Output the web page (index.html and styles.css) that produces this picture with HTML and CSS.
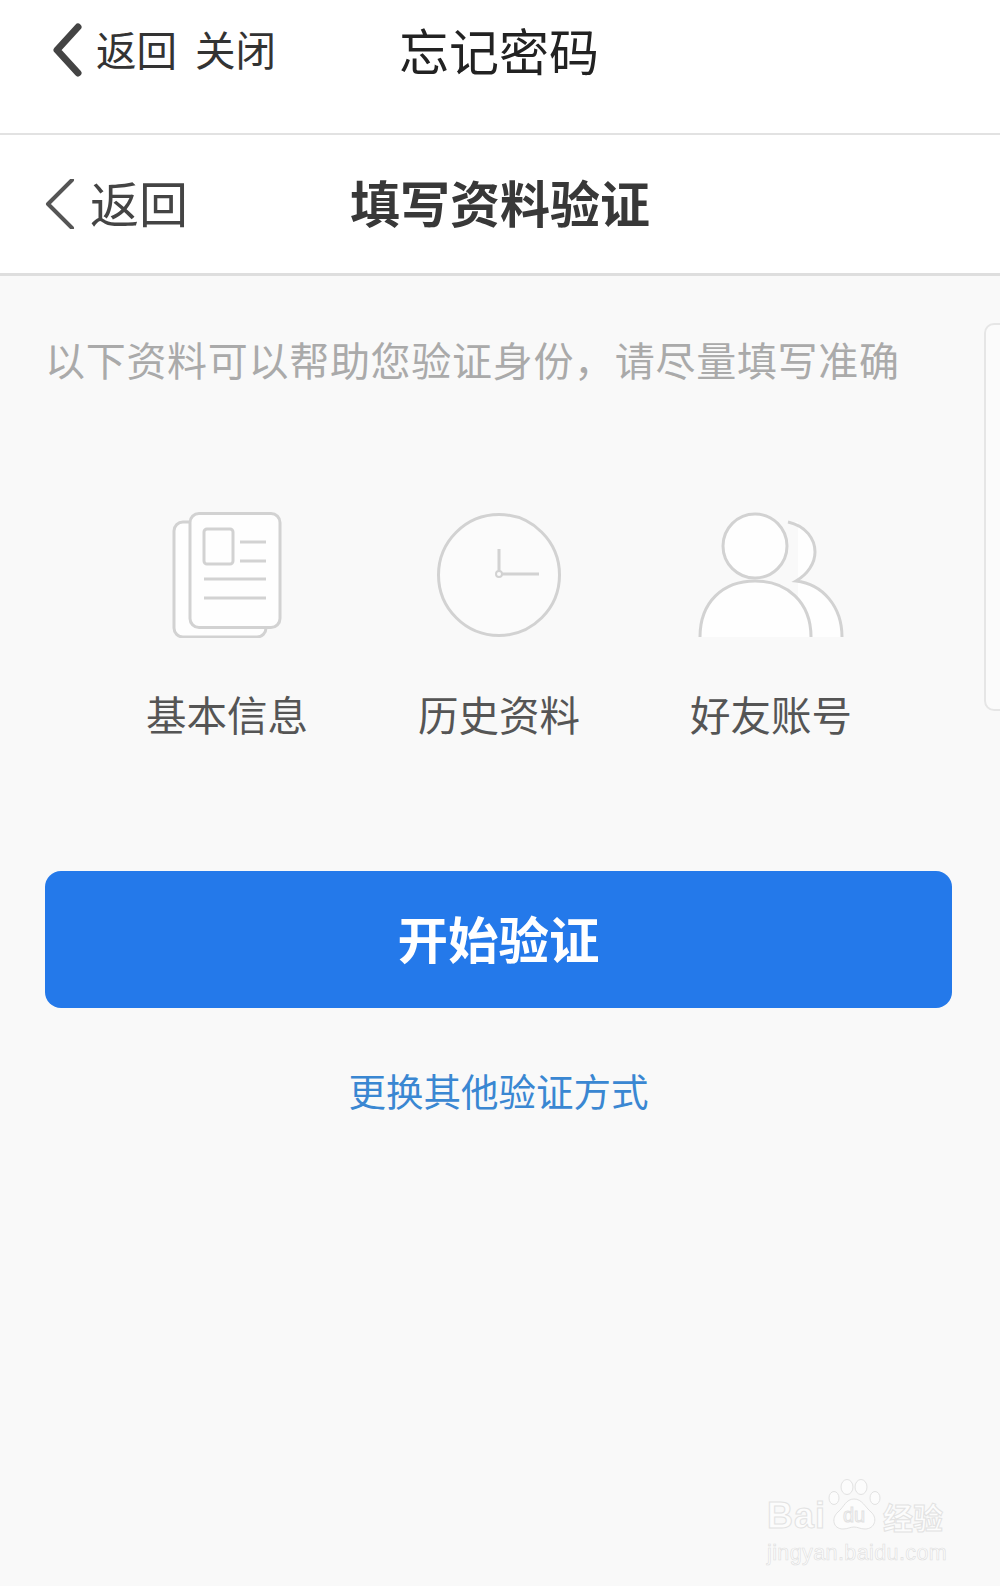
FILE: index.html
```html
<!DOCTYPE html>
<html lang="zh-CN">
<head>
    <meta charset="UTF-8">
    <meta name="viewport" content="width=device-width, initial-scale=1.0">
    <title>忘记密码</title>
    <link rel="stylesheet" href="styles.css">
</head>
<body>
    <header class="nav nav-top">
        <div class="nav-left">
            <svg class="chevron-bold" width="32" height="54" viewBox="0 0 32 54">
                <path d="M27 4 L6 27 L27 50" />
            </svg>
            <span class="nav-link">返回</span>
            <span class="nav-link">关闭</span>
        </div>
        <h1 class="nav-title">忘记密码</h1>
    </header>

    <header class="nav nav-sub">
        <div class="nav-left">
            <svg class="chevron-thin" width="30" height="50" viewBox="0 0 30 50">
                <path d="M27 1 L3 25 L27 49" />
            </svg>
            <span class="nav-back">返回</span>
        </div>
        <h2 class="nav-heading">填写资料验证</h2>
    </header>

    <main class="content">
        <p class="hint">以下资料可以帮助您验证身份，请尽量填写准确</p>

        <div class="options">
            <div class="option">
                <svg class="option-icon" width="130" height="126" viewBox="0 0 130 126">
                    <rect x="12" y="10" width="92" height="115" rx="9" />
                    <rect x="28" y="1.500" width="90" height="114" rx="9" />
                    <rect x="42" y="17" width="29" height="35" rx="3" />
                    <path d="M78 30 H104 M78 49 H104 M42 67 H104 M42 86 H104" />
                </svg>
                <span class="option-label">基本信息</span>
            </div>
            <div class="option">
                <svg class="option-icon clock" width="130" height="126" viewBox="0 0 130 126">
                    <circle cx="65" cy="63" r="60.500" />
                    <path class="clock-hand" d="M65 37 V62 H105" />
                    <circle class="clock-dot" cx="65" cy="62" r="3" />
                </svg>
                <span class="option-label">历史资料</span>
            </div>
            <div class="option">
                <svg class="option-icon" width="146" height="126" viewBox="0 0 146 126">
                    <path class="person-fill" d="M90 10 C108 14 117 27 117 40 C117 51 110 62 98 69 C125 72 144 95 144 125 H100 V10 Z" />
                    <path class="person-line" d="M90 10 C108 14 117 27 117 40 C117 51 110 62 98 69 C125 72 144 95 144 125" />
                    <path class="person-fill" d="M2 125 C2 90 25 69 57 69 C89 69 113 90 113 125 Z" />
                    <path class="person-line" d="M2 125 C2 90 25 69 57 69 C89 69 113 90 113 125" />
                    <circle cx="57" cy="34" r="32" />
                </svg>
                <span class="option-label">好友账号</span>
            </div>
        </div>

        <button type="button" class="btn-start"><span class="btn-text">开始验证</span></button>
        <a class="switch-link" href="#">更换其他验证方式</a>
    </main>

    <!-- panel peeking in from the right edge -->
    <div class="side-panel"></div>

    <!-- watermark -->
    <div class="watermark">
        <div class="wm-logo">
            <span class="wm-text">Bai</span>
            <svg class="wm-paw" width="54" height="52" viewBox="0 0 54 52">
                <ellipse cx="6" cy="19" rx="5" ry="6.500" />
                <ellipse cx="19" cy="8" rx="6" ry="7.500" />
                <ellipse cx="33" cy="8" rx="6" ry="7.500" />
                <ellipse cx="47" cy="19" rx="5" ry="6.500" />
                <path d="M26 20 C34 20 37 28 43 33 C50 39 47 50 37 50 C32 50 30 48 26 48 C22 48 20 50 15 50 C5 50 3 39 10 33 C16 28 18 20 26 20 Z" />
                <text class="wm-du" x="26" y="43">du</text>
            </svg>
            <span class="wm-text wm-cn">经验</span>
        </div>
        <div class="wm-url">jingyan.baidu.com</div>
    </div>
</body>
</html>
```

FILE: styles.css
```css
* {
    box-sizing: border-box;
    margin: 0;
    padding: 0;
}

body {
    position: relative;
    height: 1586px;
    overflow: hidden;
    background-color: #f9f9f9;
    color: #333;
    font-family: "Noto Sans CJK SC", "Liberation Sans", sans-serif;
}

.nav {
    display: grid;
    grid-template-columns: 1fr auto 1fr;
    align-items: center;
    background-color: #fff;
    border-bottom: 2px solid #e2e2e2;
}

.nav-left {
    display: flex;
    align-items: center;
}

.nav-top {
    height: 135px;
    padding-bottom: 34px;
}

.nav-top .nav-left {
    padding-left: 51px;
}

.chevron-bold {
    margin-right: 13px;
}

.chevron-bold path {
    fill: none;
    stroke: #444;
    stroke-width: 7;
    stroke-linecap: round;
    stroke-linejoin: round;
}

.nav-link {
    margin-right: 18px;
    font-size: 40.500px;
    line-height: 1;
    color: #333;
}

.nav-title {
    margin-right: 2px;
    margin-bottom: 1px;
    font-size: 50px;
    font-weight: 400;
    line-height: 1;
    color: #222;
}

.nav-sub {
    height: 141px;
    border-bottom: 3px solid #dedede;
}

.nav-sub .nav-left {
    padding-left: 45px;
}

.chevron-thin {
    margin-right: 15px;
}

.chevron-thin path {
    fill: none;
    stroke: #555;
    stroke-width: 4;
    stroke-linecap: round;
    stroke-linejoin: round;
}

.nav-back {
    margin-bottom: 6px;
    font-size: 49px;
    line-height: 1;
    color: #444;
}

.nav-heading {
    margin-bottom: 6px;
    font-size: 50px;
    font-weight: 700;
    line-height: 1;
    color: #383838;
}

.content {
    padding: 0 48px 0 45px;
}

.hint {
    margin-top: 58px;
    font-size: 40px;
    line-height: 50px;
    letter-spacing: 0.700px;
    white-space: nowrap;
    color: #aaa;
}

.options {
    display: grid;
    grid-template-columns: repeat(3, 272px);
    margin-top: 128px;
    margin-left: 46px;
}

.option {
    display: flex;
    flex-direction: column;
    align-items: center;
}

.option-icon {
    fill: #fefefe;
    stroke: #d2d2d2;
    stroke-width: 3;
}

.clock {
    fill: #fbfbfb;
}

.clock-hand,
.person-line {
    fill: none;
}

.clock-dot {
    stroke-width: 2;
}

.person-fill {
    stroke: none;
}

.option-label {
    margin-top: 51px;
    font-size: 40.500px;
    line-height: 50px;
    color: #555;
}

.btn-start {
    display: block;
    width: 907px;
    height: 137px;
    margin-top: 132px;
    border: none;
    border-radius: 16px;
    background-color: #2479ea;
    color: #fff;
    font-family: inherit;
    font-size: 50.500px;
    font-weight: 700;
    cursor: pointer;
}

.btn-text {
    display: block;
    padding-bottom: 6px;
}

.switch-link {
    display: block;
    margin-top: 58px;
    font-size: 37.500px;
    line-height: 48px;
    text-align: center;
    text-decoration: none;
    color: #3a87d2;
}

.side-panel {
    position: absolute;
    top: 323px;
    left: 984px;
    width: 40px;
    height: 388px;
    background-color: #fbfbfb;
    border: 2px solid #e6e6e6;
    border-radius: 10px;
}

.watermark {
    position: absolute;
    top: 1479px;
    left: 767px;
    width: 182px;
}

.wm-logo {
    display: flex;
    align-items: flex-end;
}

.wm-text {
    font-family: "Liberation Sans", sans-serif;
    font-size: 36px;
    font-weight: 700;
    line-height: 30px;
    letter-spacing: 1px;
    color: #fcfcfc;
    -webkit-text-stroke: 1px #e2e2e2;
}

.wm-cn {
    margin-left: 1px;
    font-family: "Noto Sans CJK SC", sans-serif;
    font-size: 30px;
    letter-spacing: 0;
}

.wm-paw {
    flex-shrink: 0;
    margin-left: 2px;
    fill: #fcfcfc;
    stroke: #e2e2e2;
    stroke-width: 1;
}

.wm-du {
    font-family: "Liberation Sans", sans-serif;
    font-size: 20px;
    text-anchor: middle;
    fill: #fcfcfc;
}

.wm-url {
    margin-top: 10px;
    font-family: "Liberation Sans", sans-serif;
    font-size: 21.500px;
    line-height: 24px;
    letter-spacing: 0.400px;
    white-space: nowrap;
    color: #fcfcfc;
    -webkit-text-stroke: 0.600px #dedede;
}
```
